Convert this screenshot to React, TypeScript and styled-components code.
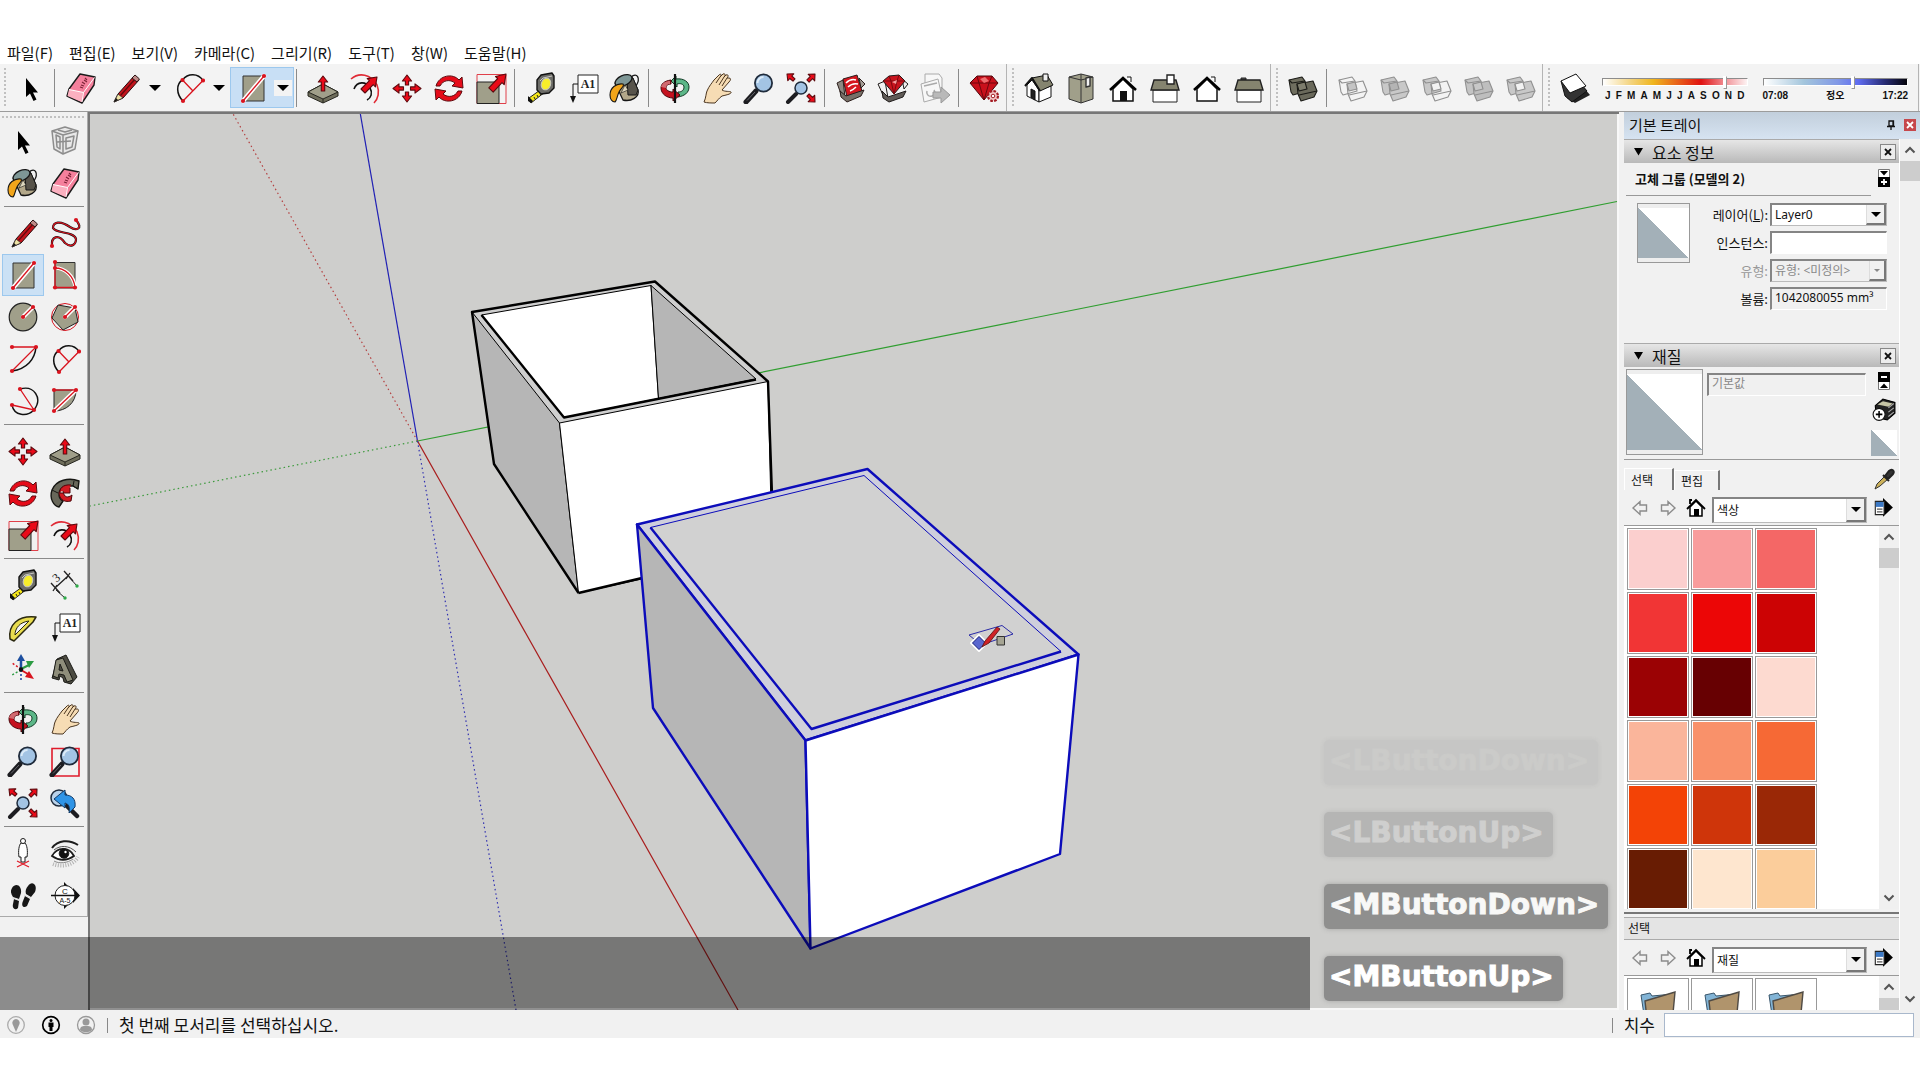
import React from 'react';
import styled, { createGlobalStyle } from 'styled-components';

const UI_FONT = '"Noto Sans CJK KR", "Noto Sans", sans-serif';
const FIELD_FONT = '"Noto Sans", "Noto Sans CJK KR", sans-serif';
const RED = '#d9141f';
const OLIVE = '#a09f8a';

const GlobalStyle = createGlobalStyle`
  *, *::before, *::after { box-sizing: border-box; }
  body { margin: 0; background: #fff; color: #111; font-family: ${UI_FONT}; }
  button, input, select { font: inherit; color: inherit; margin: 0; }
`;

/* ---------- icon drawings, all on a 32 x 32 grid ---------- */

type ArrowProps = { x1: number; y1: number; x2: number; y2: number; w?: number; head?: number; stroke?: string; fill?: string };

function FatArrow({ x1, y1, x2, y2, w = 3, head = 7, stroke = '#5c0a0e', fill = '#ea0a18' }: ArrowProps) {
  const len = Math.hypot(x2 - x1, y2 - y1);
  const ux = (x2 - x1) / len;
  const uy = (y2 - y1) / len;
  const bx = x2 - ux * head;
  const by = y2 - uy * head;
  const at = (x: number, y: number, k: number) => `${(x - uy * k).toFixed(1)},${(y + ux * k).toFixed(1)}`;
  const hw = w + 3;
  const points = [at(x1, y1, w), at(bx, by, w), at(bx, by, hw), `${x2},${y2}`, at(bx, by, -hw), at(bx, by, -w), at(x1, y1, -w)].join(' ');
  return <polygon points={points} fill={fill} stroke={stroke} strokeWidth="1.1" strokeLinejoin="round" />;
}

function Dots({ at }: { at: [number, number][] }) {
  return <>{at.map(([x, y]) => <circle key={`${x}-${y}`} cx={x} cy={y} r="2.1" fill={RED} />)}</>;
}

function CasedLine({ x1, y1, x2, y2 }: { x1: number; y1: number; x2: number; y2: number }) {
  return (
    <>
      <path d={`M${x1} ${y1}L${x2} ${y2}`} stroke="#fff" strokeWidth="4.4" strokeLinecap="round" />
      <path d={`M${x1} ${y1}L${x2} ${y2}`} stroke={RED} strokeWidth="1.3" />
      <Dots at={[[x1, y1], [x2, y2]]} />
    </>
  );
}

const lens = (
  <>
    <path d="M3 30L13 19" stroke="#1c1c20" strokeWidth="5" strokeLinecap="round" />
    <path d="M4 28.500L12 20" stroke="#66666c" strokeWidth="1" />
    <circle cx="20.500" cy="11" r="8.600" fill="#a3c4e4" stroke="#1f2b3b" strokeWidth="1.800" />
    <path d="M14.500 11a6 6 0 0 1 6-6" stroke="#dcebf8" strokeWidth="2" fill="none" />
  </>
);

const outlinedBoxes = (a: string, b: string, mid: string, stroke: string) => (
  <g stroke={stroke} strokeWidth="1.1" strokeLinejoin="round">
    <path d="M2 8L15 5L18 9L20 19L6 23L4 20Z" fill={a} />
    <path d="M10 12L26 9L30 19L27 25L14 29L11 22Z" fill={b} />
    <path d="M12 23L30 19M2 8L5 11L18 9" fill="none" />
    <path d="M10 12L18 10L20 17L12 19Z" fill={mid} />
  </g>
);

const houseFront = (
  <>
    <path d="M6 17V29H26V17L16 7Z" fill="#fff" stroke="#111" strokeWidth="1.500" />
    <path d="M20 5H24V10" fill="#fff" stroke="#111" />
    <path d="M3 18L16 6L29 18" fill="none" stroke="#000" strokeWidth="2.600" />
  </>
);

const icons: Record<string, React.ReactNode> = {
  select: <path d="M11 6V25L15 21.500L18.500 29L21.500 27.500L18 20.500H23Z" fill="#000" />,
  eraser: (
    <g strokeLinejoin="round">
      <path d="M15 2L30 5L29 13L17 31L2 24L4 17Z" fill="#f5809c" stroke="#1a1a1a" strokeWidth="1.400" />
      <path d="M4 17.500L18 20.500L16.500 30L2.500 24Z" fill="#fbb0c0" />
      <path d="M4 17.500L18.500 20.500L29.500 5.500M18.500 20.500L17 30" stroke="#fff" fill="none" />
      <path d="M20 6l2 2m-3 0l3 2m-5 0l3 2m-4 1l3 1m-4 1l3 1" stroke="#7c2237" strokeWidth="1.100" />
    </g>
  ),
  pencil: (
    <g strokeLinejoin="round">
      <path d="M5 30L9 22L25 4L30 8L14 26Z" fill="#c4141c" stroke="#28090a" />
      <path d="M5 30L9 22L14 26Z" fill="#efe3a5" stroke="#333" strokeWidth=".8" />
      <path d="M5 30L7 26L9 28Z" fill="#111" />
      <path d="M11.500 23.500L27 6" stroke="#5f090d" strokeWidth="1.200" />
      <path d="M23 6L28 10L30.500 7L26 3Z" fill="#bf8b88" stroke="#2b1414" />
    </g>
  ),
  arc: (
    <>
      <path d="M10 29C3 22 3 12 9.500 8C15 1 25 1 30 8.500" fill="none" stroke="#111" strokeWidth="1.500" />
      <path d="M10 29L30 8.500M9.500 8L19.500 18.500" stroke={RED} strokeWidth="1.300" />
      <Dots at={[[9.5, 8], [30, 8.5], [10, 29]]} />
    </>
  ),
  rectangle: (
    <>
      <path d="M6 4H27V29H6Z" fill={OLIVE} stroke="#333" />
      <CasedLine x1={6} y1={29} x2={27} y2={4} />
    </>
  ),
  pushpull: (
    <g stroke="#26261f" strokeLinejoin="round">
      <path d="M1 20L16 12L31 20V24L16 31L1 24Z" fill="#6f6e5c" />
      <path d="M1 20L16 12L31 20L16 27Z" fill={OLIVE} />
      <path d="M16 27V31" />
      <FatArrow x1={16} y1={19} x2={16} y2={4} w={1.7} head={6} />
    </g>
  ),
  offset: (
    <>
      <path d="M2 7C10 0 22 2 28 13C31 20 29 27 25 31" fill="none" stroke="#e02a35" strokeWidth="1.600" />
      <path d="M5 17C8 9 17 9 21 16C24 21 22 26 18 28" fill="none" stroke="#111" strokeWidth="1.600" />
      <FatArrow x1={14} y1={19} x2={28} y2={5} w={2.8} head={8} />
    </>
  ),
  move: (
    <>
      <FatArrow x1={16} y1={13} x2={16} y2={3} w={1.6} head={6} />
      <FatArrow x1={16} y1={20} x2={16} y2={30} w={1.6} head={6} />
      <FatArrow x1={12.5} y1={16.5} x2={2} y2={16.5} w={1.6} head={6} />
      <FatArrow x1={19.5} y1={16.5} x2={30} y2={16.5} w={1.6} head={6} />
    </>
  ),
  rotate: (
    <g fill="#e50b19" stroke="#5c0a0e" strokeLinejoin="round">
      <path d="M3 14C6 3 20 1 26 8L29 5L30 16L19 14L22 11C17 7 10 8 7 14Z" />
      <path d="M29 19C26 30 12 32 6 25L3 28L2 17L13 19L10 22C15 26 22 25 25 19Z" />
    </g>
  ),
  scale: (
    <>
      <path d="M2 2.500H31V31.500H2Z" fill="none" stroke="#e0404a" />
      <path d="M2 10H24V31.500H2Z" fill={OLIVE} stroke="#222" />
      <FatArrow x1={16} y1={18} x2={31} y2={2} w={3} head={9} />
    </>
  ),
  tape: (
    <g strokeLinejoin="round">
      <path d="M4 26L18 16L20 20L6 31Z" fill="#f4e619" stroke="#222" />
      <path d="M3 24L8 29L6 31L3 29Z" fill="#111" />
      <path d="M12 8L16 3L27 1L29 4V16L24 21L16 22L12 18Z" fill="#6c6c68" stroke="#111" strokeWidth="1.400" />
      <path d="M15 9L18 6L27 4" stroke="#c8c8c4" fill="none" />
      <ellipse cx="21" cy="12" rx="4.600" ry="6" transform="rotate(20 21 12)" fill="#f7ee2a" stroke="#c9c9be" />
      <path d="M9 25l1 2m2-4l1 2m2-4l1 2" stroke="#222" />
    </g>
  ),
  text: (
    <>
      <path d="M11 3H31V21H11Z" fill="#fff" stroke="#222" />
      <path d="M11 12H6V25" fill="none" stroke="#111" />
      <path d="M3 24H9L6 31Z" fill="#111" />
      <text x="21" y="16" fontFamily="Liberation Serif, serif" fontWeight="700" fontSize="12" textAnchor="middle" fill="#222">A1</text>
    </>
  ),
  paint: (
    <g stroke="#161616" strokeLinejoin="round">
      <path d="M22 5C28 0 32 6 27 14" fill="none" strokeWidth="1.300" />
      <path d="M6 11L23 5L29 18C31 25 22 30 14 28Z" fill="#b3a88a" strokeWidth="1.300" />
      <path d="M18 9L24 6L29 18L27 23L19 23Z" fill="#57534a" />
      <ellipse cx="14.500" cy="8.500" rx="9" ry="5" transform="rotate(-24 14.5 8.500)" fill="#7e9796" strokeWidth="1.300" />
      <path d="M16 13L19 18L12 21Z" fill="#ded7bd" strokeWidth=".6" />
      <path d="M1 23C1 16 7 11 14 12C16 14 12 16 10 20C8 24 8 28 6 30C3 30 1 27 1 23Z" fill="#f2a51a" strokeWidth="1.100" />
    </g>
  ),
  orbit: (
    <g strokeLinejoin="round">
      <path d="M17 7C25 6 30 10 30 15C30 21 25 24 19 25V20C23 20 25 18 25 15C25 12 21 11 18 12L18 15L12 9L17 4Z" fill="#5cb788" stroke="#123a25" />
      <path d="M12 8C5 9 2 12 2 16C2 22 8 26 14 26V29L21 23L14 17V20C10 20 7 18 7 16C7 13 9 12 12 12Z" fill="#c5121f" stroke="#4a070c" />
      <path d="M2 15C3 11 7 9 11 9V12C8 12 7 14 7 16Z" fill="#d06a70" />
      <path d="M16 2V31" stroke="#111" strokeWidth="2.200" />
    </g>
  ),
  pan: (
    <path
      d="M3 30C5 26 5 21 6 19C8 14 11 11 13 8L18 3C20 1 21 3 19 5L22 2C24 1 25 3 23 5L25 3C27 2 28 4 26 6L28 6C30 6 30 8 28 10L21 18C24 20 29 19 30 20C31 22 25 23 21 24C17 27 17 28 14 31C10 31 6 31 3 30Z M15 11L19 5M18 13L23 5M21 14L26 6"
      fill="#f6dcb4" stroke="#4a3520" strokeLinejoin="round" />
  ),
  zoom: lens,
  zoomWindow: (
    <>
      <path d="M3 3.500H30V31H3Z" fill="none" stroke="#df1b2b" strokeWidth="1.600" />
      {lens}
    </>
  ),
  zoomExtents: (
    <>
      <path d="M3 30L11 22" stroke="#1c1c20" strokeWidth="4" strokeLinecap="round" />
      <circle cx="16" cy="16" r="6" fill="#a3c4e4" stroke="#1f2b3b" strokeWidth="1.500" />
      <FatArrow x1={9} y1={8} x2={2} y2={2} w={1.6} head={5} />
      <FatArrow x1={23} y1={9} x2={30} y2={2} w={1.6} head={5} />
      <FatArrow x1={23} y1={23} x2={30} y2={30} w={1.6} head={5} />
    </>
  ),
  previous: (
    <>
      <circle cx="10" cy="11" r="8" fill="#b9d2ea" stroke="#1f2b3b" strokeWidth="1.500" />
      <path d="M18 19L28 29" stroke="#1c1c20" strokeWidth="4.500" strokeLinecap="round" />
      <path d="M5 12L16 3V8C23 8 27 12 26 20L20 26C21 20 20 17 16 16V21Z" fill="#2f94e6" stroke="#123a66" strokeLinejoin="round" />
    </>
  ),
  warehouse: (
    <g stroke="#2b1d1b" strokeLinejoin="round">
      <path d="M2 11L8 8L10 25L6 22Z" fill="#8f8982" />
      <path d="M8 7L22 3L27 19L12 25Z" fill="#d5161f" />
      <path d="M5 19L11 24L29 18L26 24L12 30L6 25Z" fill="#776f67" />
      <path d="M24 6L30 12L26 16Z" fill="#a49d96" />
      <path d="M11 11C14 8 18 7 21 8M13 15C16 12 19 11 23 12M15 19C18 18 20 16 21 15" stroke="#fff" fill="none" strokeWidth="1.500" />
    </g>
  ),
  extensionWarehouse: (
    <g stroke="#1e1a19" strokeLinejoin="round">
      <path d="M1 12L8 9L11 26L6 23Z" fill="#f1f1f1" />
      <path d="M5 19L11 25L29 19L26 25L12 30L6 26Z" fill="#605b57" />
      <path d="M25 7L31 12L27 17Z" fill="#eee" />
      <path d="M6 9L12 4L22 3L28 9L17 22Z" fill="#c9141e" />
      <path d="M6 9H28M12 4L14 9L17 22L20 9L22 3" fill="none" stroke="#7c080e" />
      <path d="M15 10L20 8L19 12Z" fill="#f49b9d" stroke="none" />
    </g>
  ),
  send: (
    <g stroke="#aaa" fill="#f7f7f7" strokeLinejoin="round">
      <path d="M6 2H20L23 6V18H6Z" />
      <path d="M2 12L19 7L23 25L5 30Z" />
      <path d="M5 14L18 11M8 19a4 4 0 1 0 7-1" fill="none" strokeWidth="1.500" />
      <path d="M14 20H22V15L31 23L22 31V26H14Z" fill="#b9b9b9" stroke="#999" />
    </g>
  ),
  extensionManager: (
    <g strokeLinejoin="round">
      <path d="M1 11L8 4H23L29 11L15 28Z" fill="#c9101b" stroke="#4d070b" />
      <path d="M1 11H29M8 4L10 11L15 28L20 11L23 4" fill="none" stroke="#6e070e" />
      <path d="M11 7L16 5L20 9L15 11Z" fill="#ef6e70" />
      <circle cx="24" cy="24" r="5" fill="#f2c6c6" stroke="#a31b22" strokeWidth="2.200" strokeDasharray="2.600 1.300" />
      <circle cx="24" cy="24" r="1.800" fill="#fff" stroke="#a31b22" />
    </g>
  ),
  iso: (
    <g stroke="#111" strokeLinejoin="round">
      <path d="M4 13L9 8L16 18V30L4 24Z" fill="#fff" />
      <path d="M16 18L28 14V25L16 30Z" fill="#fff" />
      <path d="M9 6L24 3L30 13L17 19Z" fill="#85846f" />
      <path d="M2 14L9 6L17 19" fill="none" strokeWidth="2" />
      <path d="M20 2H25V9H20Z" fill="#eee" />
      <path d="M8 17L12 19V28L8 25Z" fill="#222" />
    </g>
  ),
  top: (
    <g stroke="#333" strokeLinejoin="round">
      <path d="M4 5L16 2L28 5V27L16 31L4 27Z" fill={OLIVE} />
      <path d="M16 2V31M4 5L16 8L28 5" fill="none" />
      <path d="M21 6L25 5V14L21 15Z" fill="#f3f3f3" strokeWidth="1.400" />
    </g>
  ),
  front: (<>{houseFront}<path d="M13 19H20V29H13Z" fill="#111" /></>),
  right: (
    <g stroke="#222">
      <path d="M4 18H28V30H4Z" fill="#fff" />
      <path d="M5 8H27L30 18H2Z" fill="#85846f" strokeWidth="1.400" />
      <path d="M18 3H25V12H18Z" fill="#fff" strokeWidth="1.400" />
    </g>
  ),
  back: houseFront,
  left: (
    <g stroke="#222">
      <path d="M4 18H28V30H4Z" fill="#fff" />
      <path d="M8 6H13V8H8Z" fill="#555" />
      <path d="M5 8H27L30 18H2Z" fill="#85846f" strokeWidth="1.400" />
    </g>
  ),
  outerShell: outlinedBoxes('#6f6e5f', '#6a695b', '#7d7c6c', '#1b1b17'),
  intersect: outlinedBoxes('none', 'none', '#c4c4c4', '#909090'),
  union: outlinedBoxes('#c8c8c8', '#c8c8c8', '#b4b4b4', '#909090'),
  subtract: outlinedBoxes('#c8c8c8', 'none', '#f2f2f2', '#909090'),
  trim: outlinedBoxes('#c4c4c4', '#bebebe', '#c8c8c8', '#909090'),
  split: outlinedBoxes('#c8c8c8', '#c8c8c8', '#f2f2f2', '#909090'),
  shadows: (
    <g strokeLinejoin="round">
      <path d="M8 26L25 16L31 23L16 31Z" fill="#222" />
      <path d="M2 9L6 24L13 30L28 19L23 13Z" fill="#333" stroke="#111" />
      <path d="M2 9L17 2L27 14L11 21Z" fill="#fff" stroke="#111" />
    </g>
  ),
  component: (
    <g stroke="#8d8d8d" fill="none" strokeWidth="1.500" strokeLinejoin="round">
      <path d="M3 6L16 2L29 6L26 24L14 29L5 24Z" fill="#e8e8e8" />
      <path d="M3 6L14 10L29 6M14 10V29M7 10L11 12V24L8 22ZM17 13L25 11L23 22L17 24Z" />
      <path d="M9 5L16 7L23 5M8 17L22 16" />
    </g>
  ),
  freehand: (
    <>
      <path d="M27 3C35 12 27 14 21 10C11 3 4 5 4 11C7 17 25 14 27 22C27 28 22 31 16 26C9 16 2 20 3 29" fill="none" stroke="#111" strokeWidth="2.200" />
      <path d="M27 3C35 12 27 14 21 10C11 3 4 5 4 11C7 17 25 14 27 22C27 28 22 31 16 26C9 16 2 20 3 29" fill="none" stroke={RED} strokeWidth="1.200" />
      <Dots at={[[27, 3], [3, 29]]} />
    </>
  ),
  rotatedRect: (
    <>
      <path d="M6 3.500H26V29H6Z" fill={OLIVE} stroke="#333" />
      <path d="M6 9C16 9 25 17 26 28" stroke="#fff" strokeWidth="3.500" fill="none" />
      <path d="M6 3V28.500H26C25 17 16 9 6 9" fill="none" stroke={RED} strokeWidth="1.300" />
      <Dots at={[[6, 3], [6, 9], [6, 28.5], [26, 28.5]]} />
    </>
  ),
  circle: (
    <>
      <circle cx="16" cy="16" r="13.800" fill={OLIVE} stroke="#222" strokeWidth="1.200" />
      <CasedLine x1={16} y1={16} x2={26} y2={6} />
    </>
  ),
  polygon: (
    <>
      <circle cx="16" cy="16" r="13.500" fill="none" stroke={RED} />
      <path d="M26 7L29 21L14 29L3 17L9 4Z" fill={OLIVE} stroke="#222" strokeLinejoin="round" />
      <CasedLine x1={16} y1={16} x2={26} y2={6} />
    </>
  ),
  twoPointArc: (
    <>
      <path d="M29 4C28 16 20 26 5 28" fill="none" stroke="#111" strokeWidth="1.500" />
      <path d="M5 4H29L5 28" fill="none" stroke={RED} strokeWidth="1.300" />
      <Dots at={[[5, 4], [29, 4], [5, 28]]} />
    </>
  ),
  threePointArc: (
    <>
      <path d="M13 4C27 0 36 13 27 25C20 32 7 31 5 20" fill="none" stroke="#111" strokeWidth="1.400" />
      <path d="M13 4L27 25L5 20" fill="none" stroke={RED} strokeWidth="1.300" />
      <Dots at={[[13, 4], [5, 20], [27, 25]]} />
    </>
  ),
  pie: (
    <>
      <path d="M5 5H27C27 18 17 26 5 26Z" fill={OLIVE} stroke="#222" />
      <CasedLine x1={5} y1={26} x2={27} y2={5} />
      <path d="M5 5H27" stroke={RED} strokeWidth="1.300" />
      <Dots at={[[5, 5]]} />
    </>
  ),
  followMe: (
    <g stroke="#161613" strokeLinejoin="round">
      <path d="M29 12L30 4C20 0 7 3 3 13C0 22 5 29 10 30L14 24C8 21 9 12 16 9L24 9Z" fill="#68675a" strokeWidth="1.400" />
      <path d="M25 4L24 9L29 12M3 13L9 16M10 30L14 24" fill="none" />
      <path d="M22 8C14 7 10 12 11 16L21 16V11M14 14C15 21 19 21 23 18L22 24C14 26 10 21 10 15" fill="#d31a22" stroke="#4d070b" />
    </g>
  ),
  dimension: (
    <g stroke="#222" fill="none">
      <path d="M6 19L19 7M2 14L11 24M15 2L24 12M8 16L4 22M21 4L17 10" strokeWidth="1.300" />
      <path d="M7 21L16 29M20 8L28 17" />
      <text x="4" y="12" fontFamily="Liberation Serif, serif" fontSize="12" stroke="none" fill="#222" transform="rotate(-40 8 8)">3</text>
      <circle cx="16" cy="29" r="1.700" fill="#2faa4a" stroke="none" />
      <circle cx="28" cy="17" r="1.700" fill="#2faa4a" stroke="none" />
    </g>
  ),
  protractor: (
    <g strokeLinejoin="round">
      <path d="M3 28C1 14 11 4 29 6L26 11L7 30Z" fill="#e8dc4e" stroke="#2a2810" strokeWidth="1.500" />
      <path d="M8 24C8 17 13 11 22 10Z" fill="#f3f3f3" stroke="#2a2810" />
    </g>
  ),
  axes: (
    <g fill="none">
      <path d="M14 16V6" stroke="#1d4fa0" strokeWidth="2.500" />
      <path d="M10 8L14 1L18 8Z" fill="#1d4fa0" />
      <path d="M14 16L22 12" stroke="#2c9c43" strokeWidth="2" />
      <path d="M19 8L27 8L22 15Z" fill="#2c9c43" />
      <path d="M14 17L21 21" stroke="#d9141f" strokeWidth="2" />
      <path d="M22 18L27 26L18 24Z" fill="#d9141f" />
      <path d="M14 17V28" stroke="#1d3fa0" strokeDasharray="2 2" strokeWidth="1.500" />
      <path d="M14 16L5 10" stroke="#d9141f" strokeDasharray="2 2" strokeWidth="1.500" />
      <path d="M14 17L5 22" stroke="#2c9c43" strokeDasharray="2 2" strokeWidth="1.500" />
      <circle cx="14" cy="16.500" r="2.200" fill="#111" />
    </g>
  ),
  text3d: (
    <g stroke="#1b1b17" strokeLinejoin="round">
      <path d="M4 22L8 6L17 2L28 24L22 31L15 29L14 25L11 23L10 27L3 25Z" fill="#4d4c42" />
      <path d="M7 7L14 5L24 27L18 29L15 22L10 21L9 25L4 23Z M11 11L10 17L14 18Z" fill="#8f8e7b" fillRule="evenodd" />
    </g>
  ),
  positionCamera: (
    <g fill="#fff" stroke="#1b1b1b" strokeLinejoin="round">
      <path d="M14 6C12 8 11 14 12 20H14V25H18V20H20C21 14 20 8 18 6Z" />
      <circle cx="16" cy="4" r="2.500" />
      <path d="M10 24L22 30M22 24L10 30" stroke="#e01b28" strokeWidth="1.300" />
    </g>
  ),
  look: (
    <g fill="none" stroke="#1b1b1b">
      <path d="M4 27C12 30 24 29 29 20" stroke="#b3b3b3" strokeWidth="4" strokeDasharray="1 1.500" />
      <path d="M3 11C9 3 20 2 29 8" strokeWidth="2" />
      <path d="M3 19C8 10 20 9 25 19C18 24 10 24 3 19Z" fill="#fff" strokeWidth="1.800" />
      <path d="M5 13C11 8 20 8 27 15" stroke="#555" />
      <circle cx="15" cy="16.500" r="4.800" fill="#111" />
      <circle cx="16.500" cy="15" r="1.200" fill="#fff" stroke="none" />
      <path d="M5 24C10 27 19 26 24 22" stroke="#888" />
    </g>
  ),
  walk: (
    <g fill="#171717">
      <path d="M5 9C9 3 15 7 14 14L12 20L6 18C4 15 3 12 5 9Z" />
      <path d="M7 20L12 22L11 29C8 32 5 29 6 25Z" />
      <path d="M21 7C25 1 31 6 28 13L24 18L19 15C18 12 19 9 21 7Z" />
      <path d="M18 17L23 20L20 27C16 30 14 26 16 22Z" />
      <path d="M5 19l8 2M17 16l7 3" stroke="#ddd" />
    </g>
  ),
  section: (
    <>
      <path d="M15 3L20 8H15ZM15 30L20 25H15ZM24 9L31 16.500L24 24Z" fill="#111" />
      <circle cx="16" cy="16.500" r="10" fill="#fff" stroke="#222" />
      <path d="M2 16.500H30" stroke="#111" strokeWidth="1.500" />
      <text x="16" y="14.500" textAnchor="middle" fontFamily="Liberation Sans, sans-serif" fontSize="8" fill="#111">C</text>
      <text x="16" y="24" textAnchor="middle" fontFamily="Liberation Sans, sans-serif" fontSize="7" fill="#111">A-5</text>
    </>
  ),
};

const Glyph = styled.svg<{ $size?: number }>`
  display: block;
  flex: none;
  width: ${({ $size = 32 }) => $size}px;
  height: ${({ $size = 32 }) => $size}px;
`;

function Icon({ name }: { name: string }) {
  return <Glyph viewBox="0 0 32 32" fill="none" aria-hidden="true">{icons[name]}</Glyph>;
}

/* ---------- window frame ---------- */

const Window = styled.div`
  display: flex;
  flex-direction: column;
  height: 100vh;
  padding: 40px 0 42px;
  overflow: hidden;
`;

const MenuBar = styled.nav`
  display: flex;
  gap: 16px;
  height: 24px;
  padding: 0 7px;
`;

const MenuButton = styled.button`
  padding: 0;
  border: 0;
  background: none;
  font-size: 15px;
  line-height: 26px;
  white-space: nowrap;
`;

const TopBar = styled.div`
  display: flex;
  flex: none;
  height: 48px;
  background: #f3f3f3;
  border-bottom: 1px solid #9c9c9c;
`;

const ToolGroup = styled.div<{ $grow?: boolean }>`
  display: flex;
  align-items: center;
  flex: ${({ $grow }) => ($grow ? '1' : 'none')};
  margin-right: 1px;
  border-right: 1px solid #b4b4b4;
`;

const Grip = styled.span<{ $wide?: boolean }>`
  flex: none;
  width: ${({ $wide }) => ($wide ? '84px' : '2px')};
  height: ${({ $wide }) => ($wide ? '2px' : '40px')};
  margin: ${({ $wide }) => ($wide ? '4px 0 2px' : '0 4px')};
  background: repeating-linear-gradient(${({ $wide }) => ($wide ? '90deg' : '180deg')}, #c0c0c0 0 2px, transparent 2px 4px);
`;

const Rule = styled.span<{ $wide?: boolean }>`
  flex: none;
  width: ${({ $wide }) => ($wide ? '80px' : '1px')};
  height: ${({ $wide }) => ($wide ? '1px' : '38px')};
  margin: ${({ $wide }) => ($wide ? '2px 2px 5px' : '0 5px 0 2px')};
  background: #8a8a8a;
`;

const ToolButton = styled.button<{ $on?: boolean }>`
  display: grid;
  place-items: center;
  flex: none;
  width: 42px;
  height: 42px;
  padding: 0;
  border: 1px solid ${({ $on }) => ($on ? '#9cc8ee' : 'transparent')};
  background: ${({ $on }) => ($on ? '#cbe1f5' : 'transparent')};
`;

const Split = styled.div<{ $on?: boolean }>`
  display: flex;
  align-items: center;
  width: 64px;
  height: 41px;
  border: 1px solid ${({ $on }) => ($on ? '#9cc8ee' : 'transparent')};
  background: ${({ $on }) => ($on ? '#c8dff5' : 'transparent')};
`;

const SplitMain = styled.button`
  display: grid;
  place-items: center;
  width: 43px;
  height: 38px;
  padding: 0;
  border: 0;
  background: none;
`;

const Caret = styled.button`
  display: grid;
  place-items: center;
  width: 18px;
  height: 16px;
  padding: 0;
  border: 0;
  background: #f3f3f3;

  &::before {
    content: '';
    border: 6px solid transparent;
    border-top-color: #000;
    border-bottom: 0;
  }
`;

const topGroups: (string | null)[][] = [
  ['select', null, 'eraser', '+pencil', '+arc', '*rectangle', null, 'pushpull', 'offset', 'move', 'rotate', 'scale', null,
    'tape', 'text', 'paint', null, 'orbit', 'pan', 'zoom', 'zoomExtents', null, 'warehouse', 'extensionWarehouse', 'send', null, 'extensionManager'],
  ['iso', 'top', 'front', 'right', 'back', 'left'],
  ['outerShell', null, 'intersect', 'union', 'subtract', 'trim', 'split'],
];

function TopTool({ id }: { id: string | null }) {
  if (id === null) return <Rule />;
  if (id[0] === '+' || id[0] === '*') {
    const name = id.slice(1);
    return (
      <Split $on={id[0] === '*'}>
        <SplitMain aria-label={name}><Icon name={name} /></SplitMain>
        <Caret aria-label={`${name} menu`} />
      </Split>
    );
  }
  return <ToolButton aria-label={id}><Icon name={id} /></ToolButton>;
}

/* ---------- shadow sliders ---------- */

const Sliders = styled.div`
  display: flex;
  flex: 1;
  gap: 15px;
  padding: 2px 10px 0 6px;
`;

const SliderBox = styled.div`
  flex: 1;
`;

const Range = styled.input<{ $track: string }>`
  display: block;
  appearance: none;
  width: 100%;
  height: 13px;
  background: transparent;

  &::-webkit-slider-runnable-track {
    height: 8px;
    border: 1px solid #999;
    border-color: #8c8c8c #fff #fff #8c8c8c;
    background: ${({ $track }) => $track};
  }
  &::-webkit-slider-thumb {
    appearance: none;
    width: 4px;
    height: 13px;
    margin-top: -3px;
    border: 1px solid #999;
    border-color: #fff #999 #999 #fff;
    background: #fff;
  }
`;

const Ticks = styled.div<{ $inset?: boolean }>`
  display: flex;
  justify-content: space-between;
  padding: 0 ${({ $inset }) => ($inset ? '3px' : '0')};
  font: 700 10px/13px "Liberation Sans", "Noto Sans CJK KR", sans-serif;
`;

/* ---------- work area ---------- */

const Workspace = styled.div`
  display: flex;
  flex: 1;
  min-height: 0;
`;

const Stage = styled.div`
  position: relative;
  display: flex;
  flex: 1;
  min-width: 0;
`;

const Palette = styled.aside`
  flex: none;
  width: 88px;
  background: #f1f1f1;
`;

const PaletteTools = styled.div`
  display: flex;
  flex-wrap: wrap;
  padding: 0 1px 0 2px;
  border-right: 1px solid #aaa;
  border-bottom: 1px solid #aaa;
`;

const paletteTools: (string | null)[] = [
  'select', 'component', 'paint', 'eraser', null,
  'pencil', 'freehand', '*rectangle', 'rotatedRect', 'circle', 'polygon', 'twoPointArc', 'arc', 'threePointArc', 'pie', null,
  'move', 'pushpull', 'rotate', 'followMe', 'scale', 'offset', null,
  'tape', 'dimension', 'protractor', 'text', 'axes', 'text3d', null,
  'orbit', 'pan', 'zoom', 'zoomWindow', 'zoomExtents', 'previous', null,
  'positionCamera', 'look', 'walk', 'section',
];

const Canvas = styled.main`
  flex: 1;
  min-width: 0;
  border: solid #777;
  border-width: 2px 0 0 2px;
  box-shadow: inset -2px -2px #f8f8f8;
  background: #cececc;
`;

const Scene = styled.svg`
  display: block;
  width: 100%;
  height: 100%;
`;

const CaptionStrip = styled.div`
  position: absolute;
  left: 0;
  right: 309px;
  bottom: 0;
  height: 73px;
  background: rgba(0, 0, 0, 0.42);
`;

const KeyLog = styled.div`
  position: absolute;
  right: 8px;
  bottom: 9px;
  display: flex;
  flex-direction: column;
  align-items: flex-start;
  gap: 27px;
  width: 287px;
`;

const KeyBadge = styled.div<{ $bg: string; $fg: string; $glow: number }>`
  height: 45px;
  padding: 0 9px 0 5px;
  border-radius: 5px;
  background: ${({ $bg }) => $bg};
  box-shadow: 0 0 5px rgba(100, 100, 100, ${({ $glow }) => $glow});
  color: ${({ $fg }) => $fg};
  font: 700 28px/42px "DejaVu Sans", sans-serif;
  -webkit-text-stroke: 1px ${({ $fg }) => $fg};
  white-space: nowrap;
`;

function Model() {
  return (
    <Scene viewBox="90 114 1529 896" preserveAspectRatio="xMidYMid slice" role="img" aria-label="모델">
      <g fill="none" strokeWidth="1.200">
        <path d="M417.500 441L1617 201.500" stroke="#2f9e2f" />
        <path d="M417.500 441L738 1010" stroke="#a81c1c" />
        <path d="M417.500 441L360 112" stroke="#2020b4" />
        <path d="M417.500 441L232 112" stroke="#b44040" strokeDasharray="1.500 3" />
        <path d="M417.500 441L90 506" stroke="#3d9a3d" strokeDasharray="1.500 3" />
        <path d="M417.500 441L516 1010" stroke="#3030b0" strokeDasharray="1.500 3" />
      </g>
      <g stroke="#000" strokeLinejoin="round">
        <path d="M472 312L655 282L768 382L771.500 492L578 593L494 464Z" fill="#cfcfcf" stroke="none" />
        <path d="M472 312L559.500 423L578.500 593L494 464Z" fill="#b6b6b6" strokeWidth="1" />
        <path d="M559.500 423L768 381.500L772 550L578.500 593Z" fill="#fff" strokeWidth="1" />
        <path d="M481.500 315L651 285.500L658.500 398.500L564 417.500Z" fill="#fff" strokeWidth="1" />
        <path d="M651 285.500L756 379L658.500 398.500Z" fill="#b6b6b6" strokeWidth="1" />
        <path d="M481.500 315L564 417.500L756 379.500" fill="none" strokeWidth="2.400" />
        <path d="M578.500 593L494 464L472 312L655 281.500L768 381.500L772 495M578.500 593L642 578" fill="none" strokeWidth="2.400" />
      </g>
      <g stroke="#0c0cba" strokeLinejoin="round">
        <path d="M637 524.500L867.500 469L1078.500 654.500L805.500 740.500Z" fill="#cfcfdc" strokeWidth="2.400" />
        <path d="M650.500 527.500L864 475.500L1061 651.500L811.500 729Z" fill="#d1d1d1" strokeWidth="1" />
        <path d="M650.500 527.500L811.500 729L1061 651.500" fill="none" strokeWidth="2.400" />
        <path d="M637 524.500L805.500 740.500L810.500 948.500L653 708Z" fill="#b6b6b6" strokeWidth="2.400" />
        <path d="M805.500 740.500L1078.500 654.500L1060 854L810.500 948.500Z" fill="#fff" strokeWidth="2.400" />
      </g>
      <g strokeLinejoin="round">
        <path d="M969 635L1002 625.500L1013 634L981 645Z" fill="none" stroke="#2a2aa8" />
        <path d="M979 635L987 643L979 651L971 643Z" fill="#5a67cf" stroke="#fff" strokeWidth="2" />
        <path d="M979 636.500L985.500 643L979 649.500L972.500 643Z" fill="#5a67cf" stroke="#27307e" />
        <path d="M982 647L985 641L997 627L1000 629L989 643Z" fill="#cf2126" stroke="#531012" strokeWidth=".8" />
        <path d="M997 636.500H1004.500V645H997Z" fill="#a6a594" stroke="#333" />
      </g>
    </Scene>
  );
}

/* ---------- tray ---------- */

const Tray = styled.aside`
  display: flex;
  flex-direction: column;
  flex: none;
  width: 301px;
  padding-left: 5px;
  background: #f1f1f1;
`;

const TrayTitle = styled.header`
  display: flex;
  align-items: center;
  gap: 8px;
  flex: none;
  height: 27px;
  padding: 0 4px 2px 5px;
  background: linear-gradient(#c2cfdc, #d6e3f1);
  font-size: 15px;
  line-height: 24px;
`;

const Spacer = styled.span`
  flex: 1;
`;

const SmallButton = styled.button<{ $red?: boolean }>`
  display: grid;
  place-items: center;
  width: ${({ $red }) => ($red ? '12px' : '16px')};
  height: ${({ $red }) => ($red ? '12px' : '16px')};
  padding: 0;
  border: ${({ $red }) => ($red ? '0' : '1px solid #888')};
  background: ${({ $red }) => ($red ? '#c6484c' : '#ececec')};
  color: ${({ $red }) => ($red ? '#fff' : '#111')};
`;

const PlainButton = styled.button`
  display: grid;
  place-items: center;
  padding: 0;
  border: 0;
  background: none;
`;

const TrayBody = styled.div`
  display: flex;
  flex: 1;
  min-height: 0;
`;

const TrayContent = styled.div`
  display: flex;
  flex-direction: column;
  flex: 1;
  min-width: 0;
  min-height: 0;
  border-right: 1px solid #fff;
`;

const ScrollTrack = styled.div`
  display: flex;
  flex-direction: column;
  flex: none;
  align-items: center;
  justify-content: space-between;
  width: 20px;
  background: #f0f0f0;
`;

const ScrollHead = styled.div`
  width: 100%;
  overflow: hidden;
`;

const ScrollButton = styled.button`
  display: grid;
  place-items: center;
  width: 100%;
  height: 22px;
  padding: 0;
  border: 0;
  background: none;
`;

const ScrollThumb = styled.div`
  height: 20px;
  background: #cdcdcd;
`;

const SectionHead = styled.h2`
  display: flex;
  align-items: center;
  gap: 9px;
  flex: none;
  height: 24px;
  margin: 0;
  padding: 0 3px 0 10px;
  border-top: 1px solid #aaa;
  background: linear-gradient(#e6e6e6, #b9b9b9);
  font-size: 16px;
  font-weight: 400;
  line-height: 20px;
`;

const EntityPanel = styled.section`
  height: 180px;
  flex: none;
`;

const EntityTitle = styled.div`
  display: flex;
  justify-content: space-between;
  align-items: center;
  height: 32px;
  padding: 0 6px 2px 11px;
  font-size: 13px;
  font-weight: 700;
`;

const Hairline = styled.hr`
  flex: none;
  height: 1px;
  margin: 0 28px 0 2px;
  border: 0;
  background: #999;
`;

const EntityBody = styled.div`
  display: flex;
  justify-content: space-between;
  padding: 7px 12px 0 13px;
`;

const Preview = styled.div<{ $large?: boolean }>`
  flex: none;
  width: ${({ $large }) => ($large ? '77px' : '53px')};
  height: ${({ $large }) => ($large ? '86px' : '60px')};
  padding: 4px 0;
  border: 1px solid #999;
  background: #eee;
`;

const Diagonal = styled.div<{ $small?: boolean }>`
  width: ${({ $small }) => ($small ? '26px' : '100%')};
  height: ${({ $small }) => ($small ? '26px' : '100%')};
  background: linear-gradient(to top right, #a3b0b8 50%, #fff 50%);
`;

const Fields = styled.div`
  display: grid;
  grid-template-columns: auto 117px;
  grid-auto-rows: 23px;
  gap: 5px 2px;
  align-items: center;
  text-align: right;
`;

const Label = styled.label<{ $off?: boolean }>`
  font-size: 13px;
  line-height: 22px;
  color: ${({ $off }) => ($off ? '#999' : '#111')};
`;

const TextBox = styled.input<{ $flat?: boolean }>`
  width: 100%;
  height: 23px;
  min-width: 0;
  padding: 0 3px 3px;
  border: solid;
  border-width: 2px 1px 1px 2px;
  border-color: #858585 #fff #fff #858585;
  background: ${({ $flat }) => ($flat ? '#f0f0f0' : '#fff')};
  font: 12px/17px ${FIELD_FONT};

  &:disabled { color: #888; }
`;

const DropWrap = styled.div<{ $tall?: boolean }>`
  position: relative;
  flex: 1;
  min-width: 0;
  height: ${({ $tall }) => ($tall ? '26px' : '23px')};
  margin-top: ${({ $tall }) => ($tall ? '5px' : '0')};
`;

const Drop = styled.select`
  display: block;
  appearance: none;
  width: 100%;
  height: 100%;
  padding: 0 22px 0 3px;
  border: solid;
  border-width: 2px 1px 1px 2px;
  border-color: #858585 #bbb #bbb #858585;
  border-radius: 0;
  background: #fff;
  font: 12px/20px ${FIELD_FONT};

  &:disabled { color: #888; background: #f0f0f0; opacity: 1; }
`;

const DropArrow = styled.span<{ $off?: boolean }>`
  position: absolute;
  top: 2px;
  right: 1px;
  bottom: 1px;
  display: grid;
  place-items: center;
  width: ${({ $off }) => ($off ? '17px' : '20px')};
  border: solid;
  border-width: 0 2px 2px 1px;
  border-color: #fff #777 #777 #ddd;
  background: #f1f1f1;
  pointer-events: none;

  &::before {
    content: '';
    border: ${({ $off }) => ($off ? '3px' : '5px')} solid transparent;
    border-top-color: ${({ $off }) => ($off ? '#888' : '#000')};
    border-bottom: 0;
  }
`;

const MaterialTop = styled.div`
  display: flex;
  align-items: flex-start;
  gap: 4px;
  flex: none;
  height: 93px;
  padding: 2px 2px 0;
  border-bottom: 1px solid #999;
`;

const SideIcons = styled.div`
  display: flex;
  flex-direction: column;
  align-items: center;
  gap: 8px;
  width: 26px;
  padding-top: 3px;
`;

const MaterialName = styled.div`
  flex: 1;
  padding-right: 1px;
`;

const TabRow = styled.div`
  display: flex;
  align-items: flex-end;
  flex: none;
  height: 30px;
  padding-right: 4px;
`;

const Tab = styled.button<{ $on?: boolean }>`
  width: ${({ $on }) => ($on ? '50px' : '46px')};
  height: ${({ $on }) => ($on ? '22px' : '20px')};
  padding: 0 0 0 6px;
  border: solid;
  border-width: 1px 2px 0 1px;
  border-color: #fff #777 #fff #fff;
  background: none;
  font-size: 12px;
  line-height: 18px;
  text-align: left;
`;

const NavRow = styled.div`
  display: flex;
  align-items: center;
  gap: 5px;
  flex: none;
  height: 36px;
  padding: 0 5px;
  border-bottom: 1px solid #999;
`;

const NavButtons = styled.div`
  display: flex;
  gap: 6px;
`;

const ListArea = styled.div<{ $fixed?: boolean }>`
  display: flex;
  flex: ${({ $fixed }) => ($fixed ? '0 0 34px' : '1')};
  min-height: 0;
  overflow: hidden;
  background: #fff;
`;

const SwatchGrid = styled.div`
  display: grid;
  flex: 1;
  grid-template-columns: repeat(3, 62px);
  grid-auto-rows: 62px;
  gap: 2px;
  align-content: start;
  padding: 2px 3px;
  overflow: hidden;
`;

const Swatch = styled.button<{ $color?: string }>`
  display: grid;
  place-items: center;
  padding: 1px;
  border: 1px solid #999;
  background: ${({ $color = '#fff' }) => $color} content-box;
`;

const Splitter = styled.div`
  flex: none;
  height: 9px;
  border-top: 3px solid #f1f1f1;
  border-bottom: 1px solid #aaa;
  background: linear-gradient(#777 0 2px, #f1f1f1 2px);
`;

const BandTitle = styled.div`
  flex: none;
  height: 22px;
  padding-left: 4px;
  border-bottom: 1px solid #aaa;
  background: #e4e4e4;
  font-size: 12px;
  line-height: 20px;
`;

const swatches = [
  '#fbcfce', '#f99c9c', '#f46766', '#f13535', '#ec0606', '#cc0304', '#9b0204', '#670002', '#fddad0',
  '#fab59b', '#f9916a', '#f66935', '#f34306', '#cf350a', '#9a2806', '#681c03', '#fee6cf', '#fbcd9b',
];

const Cross = () => (
  <Glyph $size={8} viewBox="0 0 8 8"><path d="M1 1L7 7M7 1L1 7" stroke="currentColor" strokeWidth="1.800" /></Glyph>
);

const Chevron = ({ down }: { down?: boolean }) => (
  <Glyph $size={12} viewBox="0 0 12 12" fill="none">
    <path d={down ? 'M1.500 3.500L6 8L10.500 3.500' : 'M1.500 8.500L6 4L10.500 8.500'} stroke="#555" strokeWidth="2" />
  </Glyph>
);

const Expander = ({ minus }: { minus?: boolean }) => (
  <Glyph $size={18} viewBox="0 0 18 18">
    <path d="M3.500 .5H14.500V17.500H3.500Z" fill="#fff" stroke="#777" />
    {minus ? (
      <><path d="M3 0H15V10H3Z" fill="#000" /><path d="M6 5H12" stroke="#fff" strokeWidth="2" /><path d="M5 16L9 11.500L13 16Z" fill="#000" /></>
    ) : (
      <><path d="M3 8H15V18H3Z" fill="#000" /><path d="M6 13H12M9 10V16" stroke="#fff" strokeWidth="1.800" /><path d="M5 2H13L9 6.500Z" fill="#000" /></>
    )}
  </Glyph>
);

const Triangle = () => <Glyph $size={9} viewBox="0 0 9 9"><path d="M0 1H9L4.500 8.500Z" fill="#000" /></Glyph>;

const HollowArrow = ({ forward }: { forward?: boolean }) => (
  <Glyph $size={22} viewBox="0 0 22 22" fill="none">
    <path d={forward ? 'M18 11L11 4.500V8H4.500V14H11V17.500Z' : 'M4 11L11 4.500V8H17.500V14H11V17.500Z'} stroke="#8b8b8b" strokeWidth="1.400" />
  </Glyph>
);

function Scroller({ foot = true }: { foot?: boolean }) {
  return (
    <ScrollTrack>
      <ScrollHead>
        <ScrollButton aria-label="위로"><Chevron /></ScrollButton>
        <ScrollThumb />
      </ScrollHead>
      {foot && <ScrollButton aria-label="아래로"><Chevron down /></ScrollButton>}
    </ScrollTrack>
  );
}

function LibraryNav({ label, value }: { label: string; value: string }) {
  return (
    <NavRow>
      <NavButtons>
        <PlainButton aria-label="뒤로"><HollowArrow /></PlainButton>
        <PlainButton aria-label="앞으로"><HollowArrow forward /></PlainButton>
        <PlainButton aria-label="홈">
          <Glyph $size={22} viewBox="0 0 22 22" fill="none">
            <path d="M5 10V19H17V10L11 4Z" fill="#fff" stroke="#000" strokeWidth="1.500" />
            <path d="M2 12L11 3L20 12M5 7V3H7" stroke="#000" strokeWidth="1.800" />
            <path d="M9 12H14V19H9Z" fill="#000" />
          </Glyph>
        </PlainButton>
      </NavButtons>
      <DropWrap $tall>
        <Drop aria-label={label} defaultValue={value}><option>{value}</option></Drop>
        <DropArrow />
      </DropWrap>
      <PlainButton aria-label="세부 정보">
        <Glyph $size={22} viewBox="0 0 20 20">
          <path d="M10 1L19 9.500L10 18Z" fill="#000" />
          <path d="M3 4H11V16H3Z" fill="#fff" stroke="#222" />
          <path d="M3.500 4.500H10.500V9H3.500Z" fill="#3b78c4" />
          <path d="M4.500 11H9.500M4.500 13.500H9.500" stroke="#555" />
        </Glyph>
      </PlainButton>
    </NavRow>
  );
}

const Folder = () => (
  <Glyph $size={42} viewBox="0 0 42 42">
    <path d="M4 7L13 5L15 8L36 6L34 38L9 40Z" fill="#82b4d6" stroke="#38556b" />
    <path d="M8 13L38 4L35 36L11 40Z" fill="#b0946c" stroke="#4f4a44" strokeWidth="1.400" />
  </Glyph>
);

function TrayPanel() {
  return (
    <Tray>
      <TrayTitle>
        기본 트레이
        <Spacer />
        <PlainButton aria-label="고정">
          <Glyph $size={10} viewBox="0 0 10 10"><path d="M3 1H7.500V6H3ZM1 6.500H9M5 6V10M7 1V6" fill="none" stroke="#111" strokeWidth="1.300" /></Glyph>
        </PlainButton>
        <SmallButton $red aria-label="트레이 닫기"><Cross /></SmallButton>
      </TrayTitle>
      <TrayBody>
        <TrayContent>
          <SectionHead><Triangle />요소 정보<Spacer /><SmallButton aria-label="닫기"><Cross /></SmallButton></SectionHead>
          <EntityPanel>
            <EntityTitle>고체 그룹 (모델의 2)<PlainButton aria-label="펼치기"><Expander /></PlainButton></EntityTitle>
            <Hairline />
            <EntityBody>
              <Preview><Diagonal /></Preview>
              <Fields>
                <Label htmlFor="layer">레이어(<u>L</u>):</Label>
                <DropWrap><Drop id="layer" defaultValue="Layer0"><option>Layer0</option></Drop><DropArrow /></DropWrap>
                <Label htmlFor="instance">인스턴스:</Label>
                <TextBox id="instance" />
                <Label htmlFor="type" $off>유형:</Label>
                <DropWrap><Drop id="type" disabled><option>유형: &lt;미정의&gt;</option></Drop><DropArrow $off /></DropWrap>
                <Label htmlFor="volume">볼륨:</Label>
                <TextBox id="volume" $flat readOnly value="1042080055 mm³" />
              </Fields>
            </EntityBody>
          </EntityPanel>
          <SectionHead><Triangle />재질<Spacer /><SmallButton aria-label="닫기"><Cross /></SmallButton></SectionHead>
          <MaterialTop>
            <Preview $large><Diagonal /></Preview>
            <MaterialName><TextBox aria-label="재질 이름" $flat disabled defaultValue="기본값" /></MaterialName>
            <SideIcons>
              <PlainButton aria-label="접기"><Expander minus /></PlainButton>
              <PlainButton aria-label="재질 만들기">
                <Glyph $size={24} viewBox="0 0 22 22">
                  <path d="M3 7L10 1L21 4V14L14 20L4 18Z" fill="#222" stroke="#000" />
                  <path d="M5 6L10 3L19 5L15 8Z" fill="#c6c5a5" />
                  <path d="M15 9L20 5M15 13L20 9M15 17L20 13" stroke="#aaa" />
                  <circle cx="6.500" cy="15" r="5.500" fill="#fff" stroke="#111" />
                  <path d="M6.500 12V18M3.500 15H9.500" stroke="#000" strokeWidth="1.400" />
                </Glyph>
              </PlainButton>
              <Diagonal $small />
            </SideIcons>
          </MaterialTop>
          <TabRow>
            <Tab $on>선택</Tab>
            <Tab>편집</Tab>
            <Spacer />
            <PlainButton aria-label="샘플 페인트">
              <Glyph $size={22} viewBox="0 0 22 22">
                <path d="M2 21L4 16L12 8L15 11L7 18Z" fill="#cdb25b" stroke="#333" />
                <path d="M10 7L16 13M12 8L16 3C19 0 22 3 20 6L15 11Z" fill="#333" stroke="#222" strokeWidth="2" />
              </Glyph>
            </PlainButton>
          </TabRow>
          <LibraryNav label="재질 모음" value="색상" />
          <ListArea>
            <SwatchGrid>{swatches.map((c) => <Swatch key={c} $color={c} aria-label={c} />)}</SwatchGrid>
            <Scroller />
          </ListArea>
          <Splitter />
          <BandTitle>선택</BandTitle>
          <LibraryNav label="두 번째 모음" value="재질" />
          <ListArea $fixed>
            <SwatchGrid>{[1, 2, 3].map((n) => <Swatch key={n} aria-label={`폴더 ${n}`}><Folder /></Swatch>)}</SwatchGrid>
            <Scroller foot={false} />
          </ListArea>
        </TrayContent>
        <Scroller />
      </TrayBody>
    </Tray>
  );
}

/* ---------- status bar ---------- */

const StatusBar = styled.footer`
  display: flex;
  align-items: center;
  flex: none;
  height: 28px;
  padding: 2px 6px 0;
  background: #f1f1f1;
  font-size: 17px;
  line-height: 26px;
`;

const StatusIcons = styled.div`
  display: flex;
  gap: 15px;
`;

const StatusRule = styled.span`
  width: 1px;
  height: 15px;
  margin: 0 11px;
  background: #888;
`;

const Measure = styled.input`
  width: 250px;
  height: 24px;
  margin-left: 9px;
  border: 1px solid #a9b8cc;
  background: #fff;
`;

function StatusButtons() {
  return (
    <StatusIcons>
      <PlainButton aria-label="지리적 위치">
        <Glyph $size={20} viewBox="0 0 20 20"><circle cx="10" cy="10" r="8.300" fill="none" stroke="#aaa" strokeWidth="1.300" /><path d="M10 17L6.500 9A3.700 3.700 0 1 1 13.500 9Z" fill="#999" /></Glyph>
      </PlainButton>
      <PlainButton aria-label="작성자">
        <Glyph $size={20} viewBox="0 0 20 20"><circle cx="10" cy="10" r="8.300" fill="none" stroke="#000" strokeWidth="1.700" /><circle cx="10" cy="5.500" r="1.500" /><path d="M7.500 7.500H12.500V12H11.500V16H8.500V12H7.500Z" /></Glyph>
      </PlainButton>
      <PlainButton aria-label="로그인">
        <Glyph $size={20} viewBox="0 0 20 20"><circle cx="10" cy="10" r="8.500" fill="none" stroke="#999" strokeWidth="1.300" /><circle cx="10" cy="7" r="3.500" fill="#999" /><path d="M4 15C4 11 7 11 10 11S16 11 16 15C13 18 7 18 4 15Z" fill="#999" /></Glyph>
      </PlainButton>
    </StatusIcons>
  );
}

const menus = ['파일(F)', '편집(E)', '보기(V)', '카메라(C)', '그리기(R)', '도구(T)', '창(W)', '도움말(H)'];

const keys = [
  { text: '<LButtonDown>', bg: '#c6c6c5', fg: '#cbcbc9', glow: 0.1 },
  { text: '<LButtonUp>', bg: '#b5b5b4', fg: '#cfcfce', glow: 0.2 },
  { text: '<MButtonDown>', bg: '#8f8f8e', fg: '#f8f8f7', glow: 0.4 },
  { text: '<MButtonUp>', bg: '#8b8b8b', fg: '#ffffff', glow: 0.4 },
];

export default function App() {
  return (
    <Window>
      <GlobalStyle />
      <MenuBar>{menus.map((m) => <MenuButton key={m}>{m}</MenuButton>)}</MenuBar>
      <TopBar>
        {topGroups.map((group, g) => (
          <ToolGroup key={g}>
            <Grip />
            {group.map((id, i) => <TopTool key={i} id={id} />)}
          </ToolGroup>
        ))}
        <ToolGroup $grow>
          <Grip />
          <ToolButton aria-label="그림자"><Icon name="shadows" /></ToolButton>
          <Sliders>
            <SliderBox>
              <Range type="range" aria-label="날짜" defaultValue={86} $track="linear-gradient(90deg,#fff,#f3d27a 20%,#efb51d 35%,#e8601a 52%,#e01212 68%,#f08a90 84%,#fdf3f3)" />
              <Ticks $inset>{'JFMAMJJASOND'.split('').map((m, i) => <span key={i}>{m}</span>)}</Ticks>
            </SliderBox>
            <SliderBox>
              <Range type="range" aria-label="시간" defaultValue={63} $track="linear-gradient(90deg,#fff,#a3c5dc 28%,#8097e6 52%,#5f6cf0 66%,#262a70 85%,#05050c)" />
              <Ticks><span>07:08</span><span>정오</span><span>17:22</span></Ticks>
            </SliderBox>
          </Sliders>
        </ToolGroup>
      </TopBar>
      <Workspace>
        <Stage>
          <Palette>
            <PaletteTools>
              <Grip $wide />
              {paletteTools.map((id, i) => {
                if (id === null) return <Rule key={i} $wide />;
                const on = id[0] === '*';
                const name = on ? id.slice(1) : id;
                return <ToolButton key={i} $on={on} aria-label={name}><Icon name={name} /></ToolButton>;
              })}
            </PaletteTools>
          </Palette>
          <Canvas><Model /></Canvas>
          <CaptionStrip />
          <KeyLog>
            {keys.map((k) => <KeyBadge key={k.text} $bg={k.bg} $fg={k.fg} $glow={k.glow}>{k.text}</KeyBadge>)}
          </KeyLog>
        </Stage>
        <TrayPanel />
      </Workspace>
      <StatusBar>
        <StatusButtons />
        <StatusRule />
        첫 번째 모서리를 선택하십시오.
        <Spacer />
        <StatusRule />
        <label htmlFor="measure">치수</label>
        <Measure id="measure" />
      </StatusBar>
    </Window>
  );
}
